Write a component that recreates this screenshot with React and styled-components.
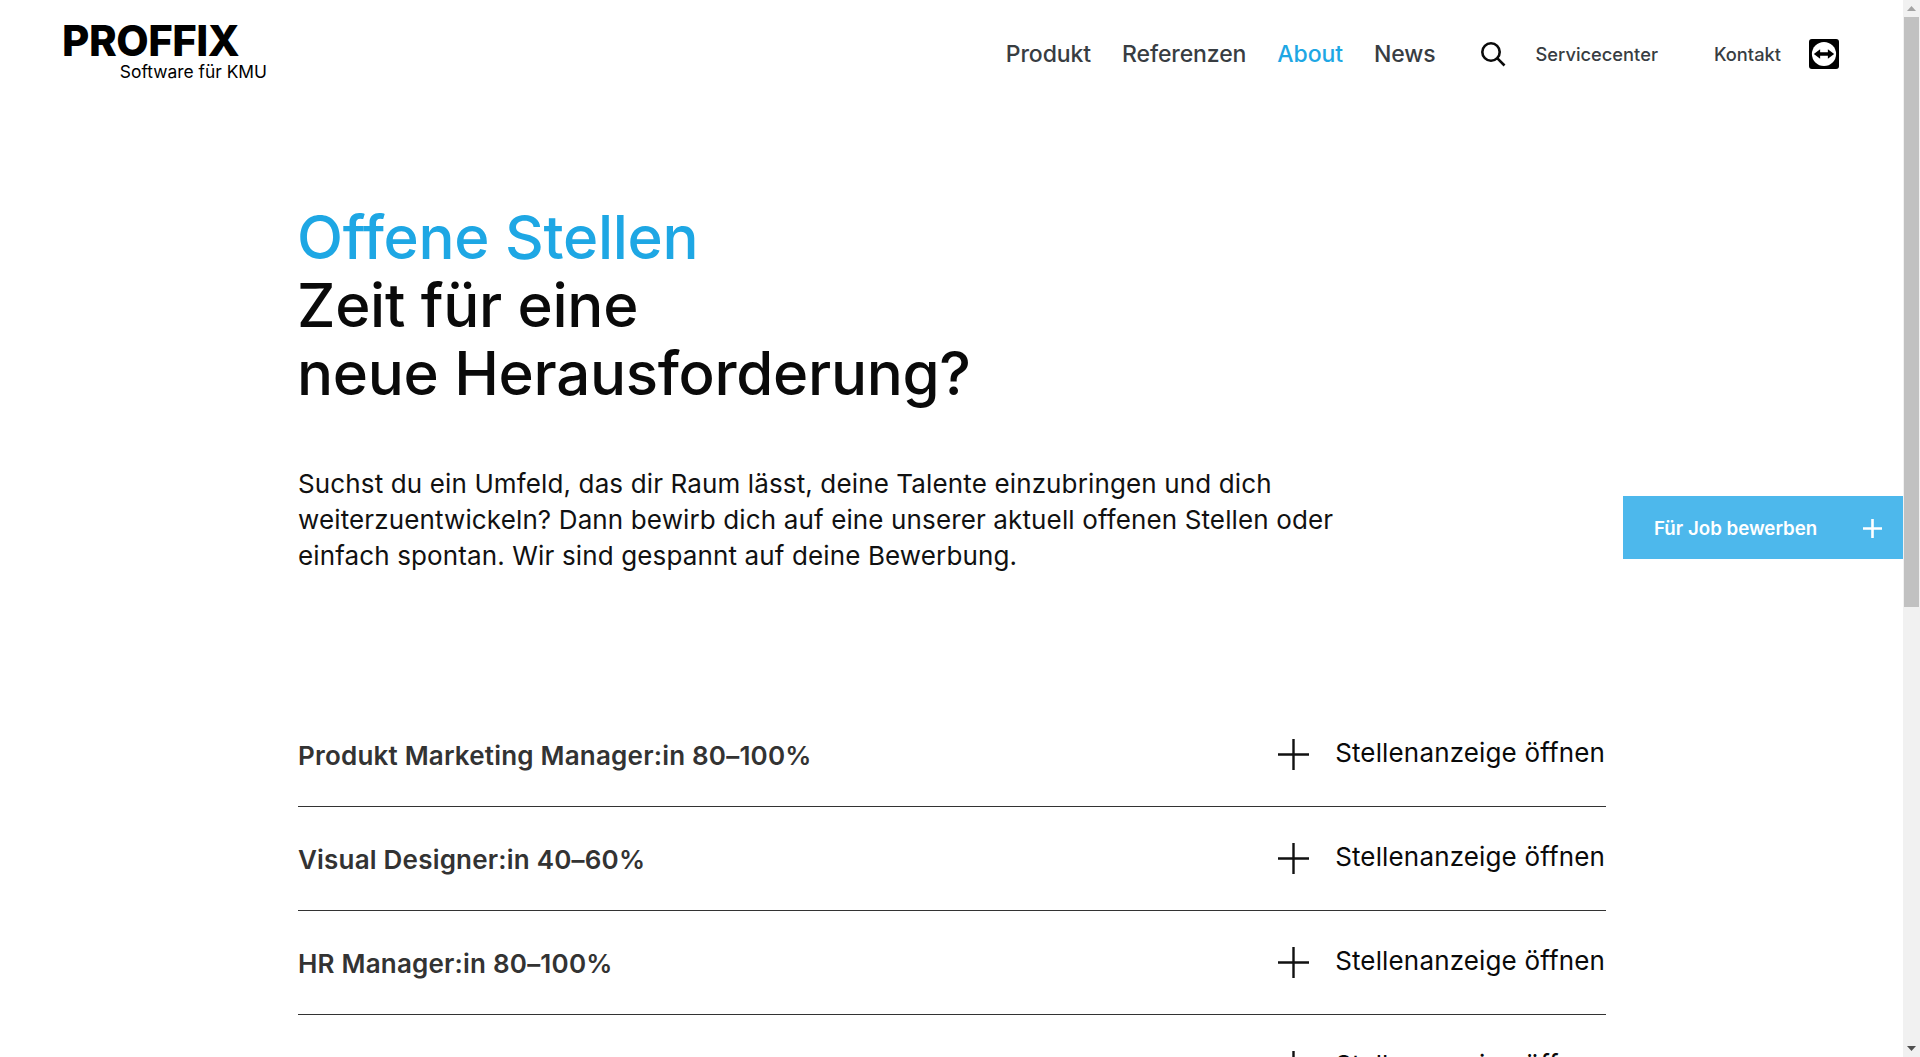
import React from 'react'
import styled, {createGlobalStyle} from 'styled-components'

const GlobalStyle = createGlobalStyle`
  html, body {
    margin: 0;
    padding: 0;
    height: 100%;
    overflow: hidden;
    background: #fff;
  }
  body {
    font-family: Inter, "Noto Sans", "Liberation Sans", sans-serif;
    color: #000;
  }
`

const Page = styled.div`
  display: flex;
  height: 100vh;
  overflow: hidden;
  position: relative;
`
const Content = styled.div`
  flex: 1;
  min-width: 0;
`
const Header = styled.header`
  display: flex;
  align-items: flex-start;
  justify-content: space-between;
  height: 108px;
  padding: 0 64px 0 62px;
`
const Logo = styled.a`
  display: flex;
  flex-direction: column;
  align-items: flex-end;
  width: 205px;
  padding-top: 22px;
  color: #000;
`
const LogoMark = styled.span`
  align-self: flex-start;
  font-size: 42px;
  line-height: 37px;
  font-weight: 800;
  letter-spacing: -0.5px;
`
const LogoClaim = styled.span`
  font-size: 17.4px;
  line-height: 20px;
  margin-top: 3px;
`
const Nav = styled.nav`
  display: flex;
  align-items: center;
  height: 108px;
`
const MainLink = styled.a`
  font-size: 23px;
  font-weight: 500;
  letter-spacing: -0.1px;
  color: ${props => props.$active ? '#1ea7e4' : '#383d42'};
  margin-right: 31px;
`
const SearchButton = styled.span`
  display: flex;
  margin: 0 30px 0 13px;
`
const MetaLink = styled.a`
  font-size: 18.3px;
  font-weight: 500;
  color: #383d42;
  margin-right: ${props => props.$gap}px;
`
const Main = styled.main`
  width: 1308px;
  margin-left: 298px;
`
const Title = styled.h1`
  margin: 95px 0 0 -1px;
  font-size: 60px;
  line-height: 68px;
  font-weight: 500;
  letter-spacing: -0.3px;
  color: #0a0a0a;
`
const TitleAccent = styled.span`
  display: block;
  color: #1ea7e4;
`
const Intro = styled.p`
  width: 1060px;
  margin: 59px 0 0 0;
  font-size: 26px;
  line-height: 36px;
  letter-spacing: 0.13px;
  color: #111;
`
const JobList = styled.div`
  margin-top: 129px;
`
const JobRow = styled.div`
  display: flex;
  align-items: center;
  justify-content: space-between;
  height: 103px;
  border-bottom: 1px solid #333;
`
const JobTitle = styled.span`
  font-size: 26px;
  font-weight: 600;
  letter-spacing: 0.2px;
  color: #333;
  padding-top: 2px;
`
const JobOpen = styled.span`
  display: flex;
  align-items: center;
  gap: 26px;
  font-size: 26px;
  letter-spacing: 0.15px;
  color: #0a0a0a;
  margin-right: 1px;
`
const JobOpenLabel = styled.span`
  padding-bottom: 4px;
`
const Apply = styled.a`
  position: absolute;
  top: 496px;
  right: 17px;
  display: flex;
  align-items: center;
  justify-content: space-between;
  box-sizing: border-box;
  width: 280px;
  height: 63px;
  padding: 2px 21px 0 31px;
  background: #4db8ec;
  color: #fff;
  font-size: 18.7px;
  font-weight: 600;
`
const Scrollbar = styled.div`
  flex: 0 0 17px;
  display: flex;
  flex-direction: column;
  align-items: center;
  background: #f1f1f1;
`
const ScrollArrow = styled.div`
  flex: 0 0 17px;
  display: flex;
  align-items: center;
  justify-content: center;
`
const ScrollTrack = styled.div`
  flex: 1;
  width: 100%;
`
const ScrollThumb = styled.div`
  width: 15px;
  margin: 0 auto;
  height: 590px;
  background: #c1c1c1;
`

const PlusIcon = ({size, stroke, color}) =>
  <svg width={size} height={size} viewBox={`0 0 ${size} ${size}`} fill="none">
    <path d={`M0 ${size / 2}H${size}M${size / 2} 0V${size}`} stroke={color} strokeWidth={stroke}/>
  </svg>

const SearchIcon = () =>
  <svg width="26" height="26" viewBox="0 0 26 26" fill="none" stroke="#0a0a0a" strokeWidth="2.6">
    <circle cx="11" cy="11" r="8.7"/>
    <path d="M17.2 17.2L24.5 24.5"/>
  </svg>

const RemoteIcon = () =>
  <svg width="30" height="30" viewBox="0 0 31 31">
    <rect width="31" height="31" rx="3" fill="#000"/>
    <circle cx="15.5" cy="15.5" r="12.5" fill="#fff"/>
    <path d="M5 15.5L11.5 10.5V13.8H19.5V10.5L26 15.5L19.5 20.5V17.2H11.5V20.5Z" fill="#000"/>
  </svg>

const jobs = [
  'Produkt Marketing Manager:in 80–100%',
  'Visual Designer:in 40–60%',
  'HR Manager:in 80–100%',
  '',
]

export default () =>
  <Page>
    <GlobalStyle/>
    <Content>
      <Header>
        <Logo>
          <LogoMark>PROFFIX</LogoMark>
          <LogoClaim>Software für KMU</LogoClaim>
        </Logo>
        <Nav>
          <MainLink>Produkt</MainLink>
          <MainLink>Referenzen</MainLink>
          <MainLink $active>About</MainLink>
          <MainLink>News</MainLink>
          <SearchButton><SearchIcon/></SearchButton>
          <MetaLink $gap={56}>Servicecenter</MetaLink>
          <MetaLink $gap={28}>Kontakt</MetaLink>
          <RemoteIcon/>
        </Nav>
      </Header>
      <Main>
        <Title>
          <TitleAccent>Offene Stellen</TitleAccent>
          Zeit für eine<br/>neue Herausforderung?
        </Title>
        <Intro>
          Suchst du ein Umfeld, das dir Raum lässt, deine Talente einzubringen und dich
          weiterzuentwickeln? Dann bewirb dich auf eine unserer aktuell offenen Stellen oder
          einfach spontan. Wir sind gespannt auf deine Bewerbung.
        </Intro>
        <JobList>
          {jobs.map((job, i) =>
            <JobRow key={i}>
              <JobTitle>{job}</JobTitle>
              <JobOpen>
                <PlusIcon size={31} stroke={2.4} color="#111"/>
                <JobOpenLabel>Stellenanzeige öffnen</JobOpenLabel>
              </JobOpen>
            </JobRow>
          )}
        </JobList>
      </Main>
    </Content>
    <Apply>
      Für Job bewerben
      <PlusIcon size={19} stroke={2.6} color="#fff"/>
    </Apply>
    <Scrollbar>
      <ScrollArrow>
        <svg width="9" height="5" viewBox="0 0 9 5"><path d="M4.5 0L9 5H0Z" fill="#a3a3a3"/></svg>
      </ScrollArrow>
      <ScrollTrack><ScrollThumb/></ScrollTrack>
      <ScrollArrow>
        <svg width="9" height="5" viewBox="0 0 9 5"><path d="M0 0H9L4.5 5Z" fill="#505050"/></svg>
      </ScrollArrow>
    </Scrollbar>
  </Page>
